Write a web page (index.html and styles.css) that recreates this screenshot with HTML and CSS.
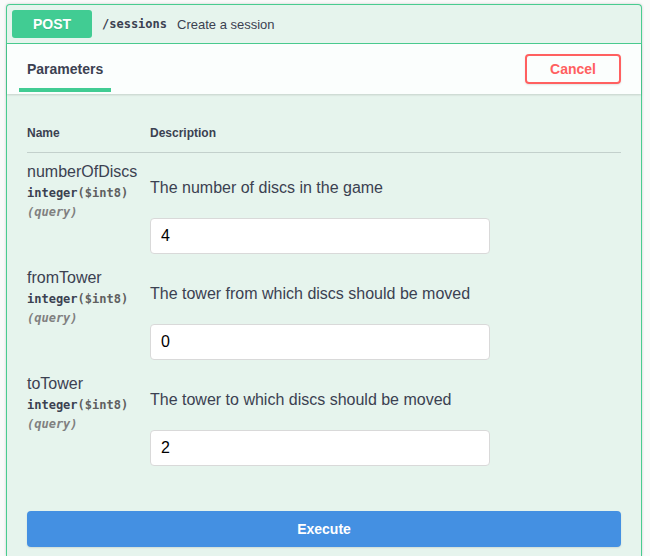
FILE: index.html
```
<!DOCTYPE html>
<html lang="en">
<head>
<meta charset="utf-8">
<meta name="viewport" content="width=device-width, initial-scale=1">
<title>Create a session</title>
<link rel="stylesheet" href="styles.css">
</head>
<body>
<main class="operation">
  <header class="summary">
    <span class="method">POST</span>
    <span class="path">/sessions</span>
    <span class="summary-text">Create a session</span>
  </header>
  <div class="section-header">
    <h4 class="tab">Parameters</h4>
    <button class="btn cancel" type="button">Cancel</button>
  </div>
  <form class="parameters">
    <table class="param-table">
      <thead>
        <tr><th class="name-col">Name</th><th>Description</th></tr>
      </thead>
      <tbody>
        <tr>
          <td>
            <label class="param-name" for="numberOfDiscs">numberOfDiscs</label>
            <div class="param-type">integer<span class="format">($int8)</span></div>
            <div class="param-in">(query)</div>
          </td>
          <td>
            <p class="param-text">The number of discs in the game</p>
            <input class="field" id="numberOfDiscs" type="text" value="4">
          </td>
        </tr>
        <tr>
          <td>
            <label class="param-name" for="fromTower">fromTower</label>
            <div class="param-type">integer<span class="format">($int8)</span></div>
            <div class="param-in">(query)</div>
          </td>
          <td>
            <p class="param-text">The tower from which discs should be moved</p>
            <input class="field" id="fromTower" type="text" value="0">
          </td>
        </tr>
        <tr>
          <td>
            <label class="param-name" for="toTower">toTower</label>
            <div class="param-type">integer<span class="format">($int8)</span></div>
            <div class="param-in">(query)</div>
          </td>
          <td>
            <p class="param-text">The tower to which discs should be moved</p>
            <input class="field" id="toTower" type="text" value="2">
          </td>
        </tr>
      </tbody>
    </table>
    <button class="btn execute" type="button">Execute</button>
  </form>
</main>
</body>
</html>
```
FILE: styles.css
```
* {
  box-sizing: border-box;
}

body {
  margin: 0;
  min-height: 100vh;
  padding: 4px 8px 0 6px;
  display: flex;
  flex-direction: column;
  background: #fafafa;
  color: #3b4151;
  font-family: "Liberation Sans", Arial, sans-serif;
}

.operation {
  flex: 1;
  border: 1px solid #49cc90;
  border-bottom: 0;
  border-radius: 4px 4px 0 0;
  background: #e6f4ed;
  box-shadow: 0 0 3px rgba(0, 0, 0, 0.19);
}

.summary {
  display: flex;
  align-items: center;
  gap: 10px;
  padding: 5px;
  border-bottom: 1px solid #49cc90;
}

.method {
  min-width: 80px;
  padding: 6px 15px;
  border-radius: 3px;
  background: #41cc93;
  color: #fff;
  font-size: 14px;
  font-weight: 700;
  line-height: 16px;
  text-align: center;
  text-shadow: 0 1px 0 rgba(0, 0, 0, 0.1);
}

.path,
.param-type,
.param-in {
  font-family: "DejaVu Sans Mono", monospace;
  font-size: 12px;
  font-weight: 700;
}

.summary-text {
  font-size: 13px;
}

.section-header {
  display: flex;
  align-items: center;
  justify-content: space-between;
  min-height: 50px;
  padding: 0 20px 0 12px;
  background: #fbfefd;
  box-shadow: 0 1px 2px rgba(0, 0, 0, 0.15);
}

.tab {
  align-self: flex-end;
  margin: 0 0 2px;
  padding: 0 8px 10px;
  border-bottom: 4px solid #41cc93;
  font-size: 14px;
  line-height: 18px;
}

.btn {
  border-radius: 4px;
  font-family: inherit;
  font-size: 14px;
  font-weight: 700;
  line-height: 16px;
  box-shadow: 0 1px 2px rgba(0, 0, 0, 0.1);
  cursor: pointer;
}

.cancel {
  padding: 5px 23px;
  border: 2px solid #ff6060;
  background: transparent;
  color: #ff6060;
}

.parameters {
  padding: 20px;
  padding-bottom: 0;
}

.param-table {
  width: 100%;
  margin-bottom: 40px;
  border-collapse: separate;
  border-spacing: 0;
}

.param-table th {
  padding: 12px 0;
  border-bottom: 1px solid #c3d0cc;
  font-size: 12px;
  line-height: 14px;
  text-align: left;
}

.param-table .name-col {
  width: 123px;
}

.param-table td {
  padding: 9px 0 5px;
  vertical-align: top;
  line-height: 20px;
}

.param-name {
  display: block;
  font-size: 16px;
}

.param-type {
  line-height: 22px;
}

.format {
  color: #606060;
}

.param-in {
  color: #808080;
  font-style: italic;
  line-height: 16px;
}

.param-text {
  margin: 16px 0 20px;
  font-size: 16px;
}

.field {
  display: block;
  width: 100%;
  max-width: 340px;
  height: 36px;
  padding: 0 10px;
  border: 1px solid #d9d9d9;
  border-radius: 4px;
  background: #fff;
  color: #000;
  font-family: inherit;
  font-size: 16px;
}

.execute {
  width: 100%;
  padding: 10px;
  border: 0;
  background: #4490e2;
  color: #fff;
}
```
